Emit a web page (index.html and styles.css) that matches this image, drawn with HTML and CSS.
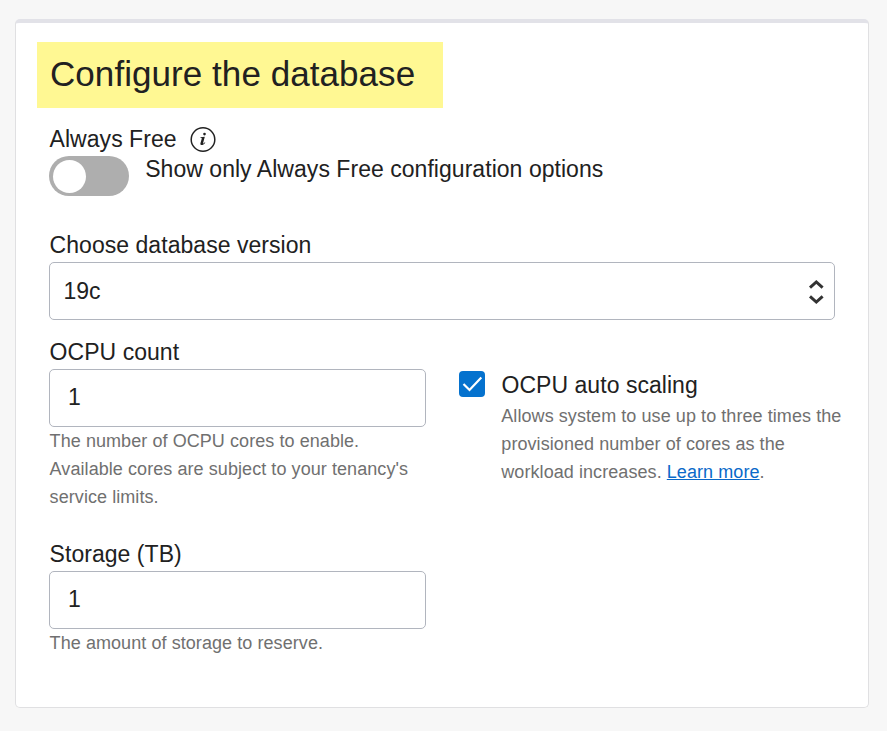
FILE: index.html
```html
<!DOCTYPE html>
<html lang="en">
<head>
<meta charset="utf-8">
<title>Configure the database</title>
<link rel="stylesheet" href="styles.css">
</head>
<body>
<main class="card">
  <h1 class="title"><span>Configure the database</span></h1>
  <div class="free-label"><span class="label free-text">Always Free</span>
    <svg class="info" width="26" height="27" viewBox="0 0 26 27"><g transform="translate(0 .5)"><circle cx="13" cy="13" r="11.8" fill="none" stroke="#222" stroke-width="1.5"/><circle cx="14.5" cy="7.6" r="1.3" fill="#222"/><path d="M14.8 10.2l-1.7 6.2c-.1.6.2.7.7.3l1.1-1 .4.5c-1.5 1.8-2.8 2.6-4.1 2.3-.8-.2-1-.9-.7-1.9l1.3-4.5c.1-.5-.1-.7-.6-.7h-.7v-.6z" fill="#222"/></g></svg>
  </div>
  <div class="free-row"><div class="toggle"><div class="knob"></div></div><span class="label option-text">Show only Always Free configuration options</span></div>
  <section class="version">
    <div class="label"><span>Choose database version</span></div>
    <div class="field select"><span>19c</span>
      <svg width="16" height="26" viewBox="0 0 16 26" fill="none" stroke="#333" stroke-width="3"><path d="M2 9.6L8.3 3.9l6.3 5.7M2 18.4l6.3 5.6 6.3-5.6"/></svg>
    </div>
  </section>
  <div class="columns">
    <section class="ocpu">
      <div class="label"><span>OCPU count</span></div>
      <div class="field number"><span>1</span></div>
      <div class="help"><span>The number of OCPU cores to enable.</span><br><span>Available cores are subject to your tenancy's</span><br><span>service limits.</span></div>
    </section>
    <section class="scaling">
      <svg class="check" width="26" height="26" viewBox="0 0 26 26"><rect width="26" height="26" rx="4" fill="#0572ce"/><path d="M4.5 13l6 6L22.3 6.5" fill="none" stroke="#fff" stroke-width="2.2"/></svg>
      <div>
        <div class="label"><span>OCPU auto scaling</span></div>
        <div class="help"><span>Allows system to use up to three times the</span><br><span>provisioned number of cores as the</span><br><span>workload increases. <a href="#">Learn more</a>.</span></div>
      </div>
    </section>
  </div>
  <section class="storage">
    <div class="label"><span>Storage (TB)</span></div>
    <div class="field number"><span>1</span></div>
    <div class="help"><span>The amount of storage to reserve.</span></div>
  </section>
</main>
</body>
</html>
```
FILE: styles.css
```css
* { box-sizing: border-box; }
body { margin: 0; padding: 19px 18px 0 15px; height: 731px; background: #f7f7f7; font-family: "Liberation Sans", Arial, sans-serif; color: #212121; overflow: hidden; }
.card { height: 689px; background: #fff; border: 1px solid #e0e0e2; border-top: 4px solid #e2e2e8; border-radius: 5px; padding: 19px 33px 0; }
.title { margin: 0 0 0 -12px; width: 406px; height: 66px; padding-left: 13px; background: #fff893; font-size: 35px; font-weight: 400; line-height: 64px; white-space: nowrap; letter-spacing: .06px; }
.label { font-size: 23px; line-height: 28px; letter-spacing: .04px; white-space: nowrap; padding-left: .6px; }
.free-label { display: flex; height: 30px; margin-top: 18px; }
.free-text { line-height: 26px; }
.info { margin-left: 13px; }
.free-row { display: flex; height: 40px; }
.toggle { width: 80px; height: 40px; padding: 4px; border-radius: 20px; background: #aeaeae; }
.knob { width: 33px; height: 33px; border-radius: 50%; background: #fff; }
.option-text { margin-left: 15.6px; line-height: 26px; }
.version { margin-top: 35px; }
.field { display: flex; align-items: center; height: 58px; border: 1px solid #b1b5be; border-radius: 5px; padding: 0 18px; font-size: 23px; }
.number { padding-bottom: 2px; }
.version .label, .ocpu .label, .storage .label { height: 31px; }
.select { justify-content: space-between; padding: 0 10px 0 13.5px; }
.columns { display: flex; margin-top: 18px; }
.ocpu, .storage { flex: none; width: 377px; }
.help { padding-left: .6px; font-size: 18px; line-height: 28px; letter-spacing: .07px; color: #707070; white-space: nowrap; }
.help a { color: #0a69c9; }
.scaling { display: flex; margin: 33px 0 0 33px; }
.scaling .label { height: 31px; padding-left: .5px; }
.scaling .help { padding-left: .3px; }
.check { margin: 0 16px 0 0; flex: none; }
.storage { margin-top: 29px; }
```
